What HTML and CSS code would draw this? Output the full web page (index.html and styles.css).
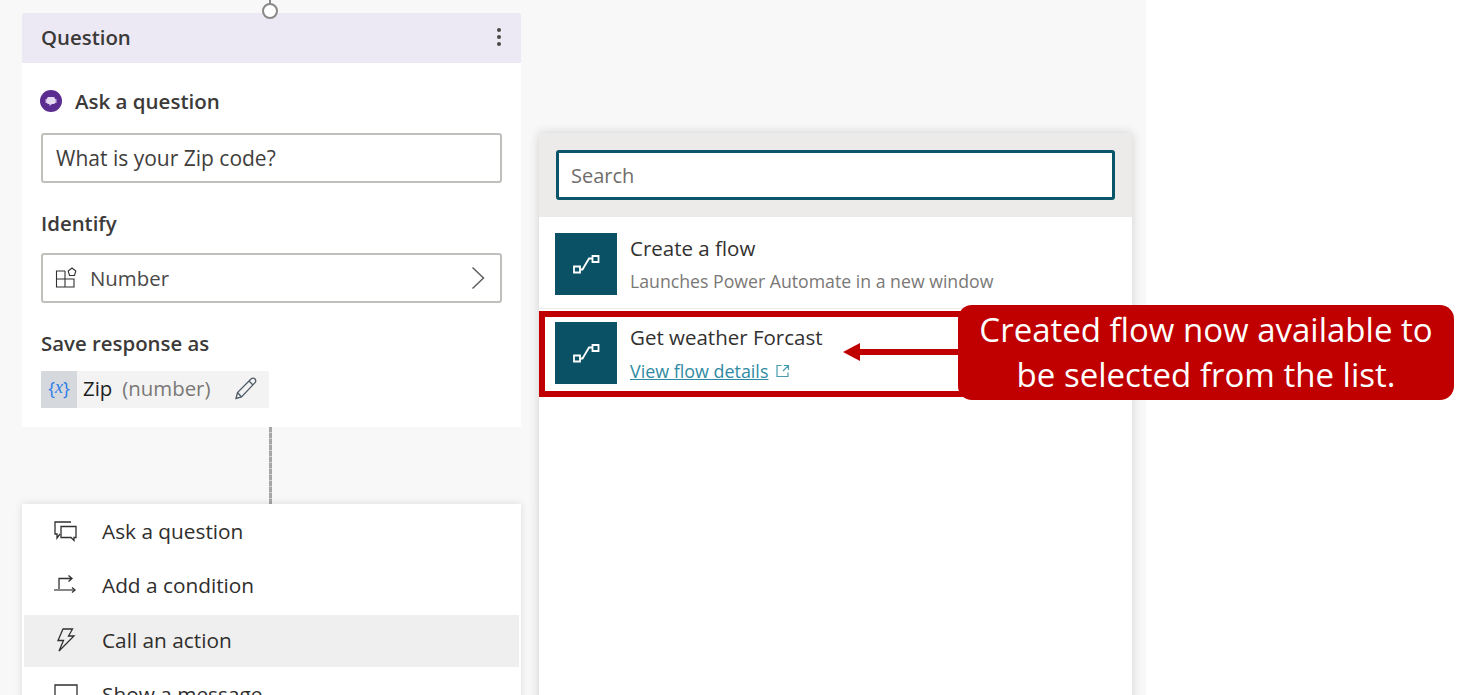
FILE: index.html
```html
<!DOCTYPE html>
<html>

<head>
  <meta name="viewport" content="width=device-width,initial-scale=1.0">
  <title>Get weather Forcast</title>
  <link rel="stylesheet" href="styles.css">
</head>

<body>

  <div class="stage">
    <div class="flowColumn">
      <span class="nodeLine"></span>
      <span class="nodeDot"></span>

      <section class="card">
        <header class="cardHead">
          <h2>Question</h2>
          <span class="dots"><i></i><i></i><i></i></span>
        </header>
        <div class="cardBody">
          <div class="askRow">
            <svg class="askIcon" width="22" height="22" viewBox="0 0 22 22">
              <circle cx="11" cy="11" r="11" fill="#5c2d91" />
              <path d="M5.500 9h1.500v4H5.500zM15 9h1.500v4H15z" fill="#cdb9e4" />
              <rect x="7" y="7" width="8" height="7" rx="1.500" fill="#e6d9f2" />
              <path d="M9.500 14v2l2.500-2z" fill="#e6d9f2" />
            </svg>
            <span class="askText">Ask a question</span>
          </div>
          <div class="field">What is your Zip code?</div>
          <label class="fieldLabel identify">Identify</label>
          <div class="field selectField">
            <svg width="22" height="22" viewBox="0 0 22 22" fill="none" stroke="#323130" stroke-width="1.100">
              <path d="M10 4H1.500v16H19v-8H1.500M10 4v16" />
              <path d="M17 1l3.800 3-1.300 4.500h-5L13.200 4z" />
            </svg>
            <span class="selectText">Number</span>
            <svg class="chevron" width="14" height="24" viewBox="0 0 14 24" fill="none" stroke="#605e5c" stroke-width="1.500">
              <path d="M1.500 1.500L12.500 12L1.500 22.500" />
            </svg>
          </div>
          <label class="fieldLabel saveAs">Save response as</label>
          <div class="chip">
            <span class="chipVar">{<em>x</em>}</span>
            <span class="chipName">Zip</span>
            <span class="chipType">(number)</span>
            <svg class="pencil" width="24" height="24" viewBox="0 0 24 24" fill="none" stroke="#4f5b66" stroke-width="1.300">
              <path d="M2 22.500l1.500-6L17 3c1.300-1.300 3-1.300 4 0s1 2.700-.2 3.900L7.500 21z" />
              <path d="M3.500 16.500l4 4.500M15 5l4 4" />
            </svg>
          </div>
        </div>
      </section>

      <div class="connector"></div>

      <ul class="addMenu">
        <li>
          <svg width="26" height="24" viewBox="0 0 26 24" fill="none" stroke="#323130" stroke-width="1.300">
            <path d="M18 3H2v12h2v4l3-4" />
            <path d="M8 7.500h15v11h-2v3l-3-3H8z" />
          </svg>
          <span>Ask a question</span>
        </li>
        <li>
          <svg width="26" height="24" viewBox="0 0 26 24" fill="none" stroke="#323130" stroke-width="1.300">
            <path d="M6 16V5.500h13M15.500 2.500L19 5.500l-3.500 3" />
            <path d="M1 17h20" stroke="#7a7a7a" stroke-width="1.800" />
            <path d="M19 14.500L22 17l-3 2.500" />
          </svg>
          <span>Add a condition</span>
        </li>
        <li class="active">
          <svg width="26" height="26" viewBox="0 0 26 26" fill="none" stroke="#323130" stroke-width="1.300">
            <path d="M10 2h9.500l-4 7h5.500L6 24l4.500-10.500H5z" />
          </svg>
          <span>Call an action</span>
        </li>
        <li>
          <svg width="26" height="24" viewBox="0 0 26 24" fill="none" stroke="#323130" stroke-width="1.300">
            <path d="M2 3h22v14H2z" />
          </svg>
          <span>Show a message</span>
        </li>
      </ul>
    </div>

    <aside class="picker">
      <div class="searchBar">
        <div class="searchBox">Search</div>
      </div>
      <div class="flowItem firstItem">
        <span class="flowIcon">
          <svg width="28" height="20" viewBox="0 0 28 20" fill="none" stroke="#fff" stroke-width="1.800">
            <path d="M2 12.500h6v6H2zM20.500 2h6v6h-6zM8 15.500h2.500L17 4.500h3.500" />
          </svg>
        </span>
        <div>
          <div class="flowName">Create a flow</div>
          <div class="flowSub">Launches Power Automate in a new window</div>
        </div>
      </div>
      <div class="flowItem">
        <span class="flowIcon">
          <svg width="28" height="20" viewBox="0 0 28 20" fill="none" stroke="#fff" stroke-width="1.800">
            <path d="M2 12.500h6v6H2zM20.500 2h6v6h-6zM8 15.500h2.500L17 4.500h3.500" />
          </svg>
        </span>
        <div>
          <div class="flowName">Get weather Forcast</div>
          <div class="flowLinkRow">
            <a class="flowLink">View flow details</a>
            <svg width="14" height="14" viewBox="0 0 14 14" fill="none" stroke="#4a9ab0" stroke-width="1.200">
              <path d="M5.500 1.500H1v11h11V8.500M8 1.500h4.500V6M12.500 1.500L7 7" />
            </svg>
          </div>
        </div>
      </div>
    </aside>
  </div>

  <div class="highlight"></div>
  <div class="arrow"></div>
  <div class="callout">Created flow now available to<br>be selected from the list.</div>

</body>

</html>
```

FILE: styles.css
```css
body {
  margin: 0;
  height: 695px;
  overflow: hidden;
  background: #fff;
  font-family: "Open Sans", "Noto Sans", sans-serif;
  color: #323130;
}

.stage {
  display: flex;
  align-items: flex-start;
  width: 1146px;
  height: 695px;
  overflow: hidden;
  background: #f8f8f8;
}

/* left column */
.flowColumn {
  position: relative;
  width: 499px;
  margin-left: 22px;
  padding-top: 13px;
}

.nodeLine {
  position: absolute;
  top: 0;
  left: 247px;
  width: 2px;
  height: 4px;
  background: #8a8886;
}

.nodeDot {
  position: absolute;
  top: 3px;
  left: 240px;
  width: 12px;
  height: 12px;
  border: 2px solid #8a8886;
  border-radius: 50%;
  background: #fff;
}

.card {
  background: #fff;
  height: 414px;
}

.cardHead {
  display: flex;
  align-items: center;
  justify-content: space-between;
  box-sizing: border-box;
  height: 50px;
  padding: 0 20px 2px 19px;
  background: #ede9f4;
  border-radius: 2px 2px 0 0;
}

.cardHead h2 {
  margin: 0;
  font-size: 20.400px;
  font-weight: 600;
  color: #3b3a39;
}

.dots {
  display: flex;
  flex-direction: column;
  gap: 3px;
}

.dots i {
  width: 4px;
  height: 4px;
  border-radius: 50%;
  background: #4a4947;
}

.cardBody {
  padding: 0 19px;
}

.askRow {
  display: flex;
  align-items: center;
  gap: 13px;
  height: 24px;
  margin-top: 26px;
  margin-bottom: 20px;
  margin-left: -1px;
}

.askText {
  font-size: 20.500px;
  font-weight: 600;
  color: #3b3a39;
}

.field {
  display: flex;
  align-items: center;
  box-sizing: border-box;
  height: 50px;
  padding: 0 13px;
  border: 2px solid #c1bfbb;
  border-radius: 3px;
  font-size: 21px;
  color: #3f3e3d;
}

.fieldLabel {
  display: block;
  font-size: 20.400px;
  font-weight: 600;
  line-height: 28px;
  color: #3b3a39;
}

.identify {
  margin-top: 26px;
  margin-bottom: 16px;
}

.saveAs {
  margin-top: 26px;
  margin-bottom: 14px;
}

.selectField {
  gap: 13px;
  padding-left: 12px;
}

.selectText {
  flex: 1;
  font-size: 20.400px;
  color: #4a4947;
}

.chevron {
  margin-right: 2px;
}

.chip {
  display: flex;
  align-items: center;
  width: 228px;
  height: 37px;
  background: #f3f3f3;
  border-radius: 2px;
  font-size: 20.400px;
}

.chipVar {
  display: flex;
  align-items: center;
  justify-content: center;
  box-sizing: border-box;
  width: 36px;
  height: 37px;
  padding-bottom: 4px;
  background: #d5d8dc;
  color: #2b7de9;
  font-size: 18px;
}

.chipVar em {
  font-family: "Liberation Serif", serif;
}

.chipName {
  margin-left: 6px;
  margin-bottom: 4px;
  color: #201f1e;
}

.chipType {
  margin-left: 10px;
  margin-bottom: 4px;
  color: #7a7876;
}

.pencil {
  margin-left: 24px;
  margin-bottom: 3px;
}

.connector {
  width: 3px;
  height: 77px;
  margin-left: 247px;
  background: repeating-linear-gradient(#a6a6a6 0, #a6a6a6 5px, #cfcfcf 5px, #cfcfcf 6px);
}

.addMenu {
  display: flex;
  flex-direction: column;
  gap: 2.600px;
  list-style-type: none;
  margin: 0;
  padding: 1.500px 2px 0;
  height: 230px;
  background: #fff;
  box-shadow: 0 0 8px rgba(0, 0, 0, 0.12);
}

.addMenu li {
  display: flex;
  align-items: center;
  flex: none;
  gap: 23px;
  box-sizing: border-box;
  height: 52px;
  padding-left: 29px;
  padding-bottom: 2px;
  font-size: 20.800px;
  color: #2f2e2d;
}

.addMenu li.active {
  background: #efefef;
}

/* flow picker */
.picker {
  width: 593px;
  height: 580px;
  margin-top: 133px;
  margin-left: 18px;
  background: #fff;
  box-shadow: 0 0 10px rgba(0, 0, 0, 0.16);
}

.searchBar {
  box-sizing: border-box;
  height: 84px;
  padding: 17px;
  background: #edebe9;
}

.searchBox {
  display: flex;
  align-items: center;
  box-sizing: border-box;
  height: 50px;
  padding: 0 12px;
  background: #fff;
  border: 3px solid #0b556a;
  border-radius: 3px;
  font-size: 20px;
  color: #6f6d6b;
}

.flowItem {
  display: flex;
  align-items: center;
  gap: 13px;
  box-sizing: border-box;
  height: 88px;
  padding-left: 16px;
}

.firstItem {
  height: 92px;
  padding-top: 2px;
  border-bottom: 1px solid #edebe9;
}

.flowIcon {
  display: flex;
  align-items: center;
  justify-content: center;
  width: 62px;
  height: 62px;
  background: #0b5166;
}

.flowName {
  font-size: 20.500px;
  line-height: 26px;
  color: #323130;
}

.flowSub {
  margin-top: 8px;
  font-size: 17.700px;
  line-height: 24px;
  color: #7a7876;
}

.flowLinkRow {
  display: flex;
  align-items: center;
  gap: 8px;
  margin-top: 9px;
  line-height: 24px;
}

.flowLink {
  font-size: 17.900px;
  color: #2f8ba3;
  text-decoration: underline;
}

/* annotation laid over the screenshot */
.highlight {
  position: absolute;
  top: 311px;
  left: 539px;
  box-sizing: border-box;
  width: 430px;
  height: 86px;
  border: 6px solid #c00000;
}

.arrow {
  position: absolute;
  top: 349px;
  left: 858px;
  width: 105px;
  height: 6px;
  background: #c00000;
}

.arrow::before {
  content: "";
  position: absolute;
  top: -6px;
  left: -15px;
  border-top: 9px solid transparent;
  border-bottom: 9px solid transparent;
  border-right: 17px solid #c00000;
}

.callout {
  position: absolute;
  top: 305px;
  left: 958px;
  box-sizing: border-box;
  width: 496px;
  height: 95px;
  padding-top: 3px;
  background: #c00000;
  border-radius: 14px;
  color: #fff;
  font-size: 33px;
  line-height: 44.500px;
  text-align: center;
}
```
